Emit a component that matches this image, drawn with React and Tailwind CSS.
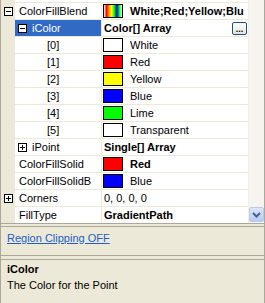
import React from "react";

const rows = [
  { name: "ColorFillBlend", level: 0, expander: "minus", swatch: "blend", value: "White;Red;Yellow;Blu", bold: true },
  { name: "iColor", level: 1, expander: "minus", value: "Color[] Array", bold: true, selected: true, button: true },
  { name: "[0]", level: 2, swatch: "#FFFFFF", value: "White" },
  { name: "[1]", level: 2, swatch: "#FF0000", value: "Red" },
  { name: "[2]", level: 2, swatch: "#FFFF00", value: "Yellow" },
  { name: "[3]", level: 2, swatch: "#0000FF", value: "Blue" },
  { name: "[4]", level: 2, swatch: "#00FF00", value: "Lime" },
  { name: "[5]", level: 2, swatch: "#FFFFFF", value: "Transparent" },
  { name: "iPoint", level: 1, expander: "plus", value: "Single[] Array", bold: true },
  { name: "ColorFillSolid", level: 0, swatch: "#FF0000", value: "Red", bold: true },
  { name: "ColorFillSolidB", level: 0, swatch: "#0000FF", value: "Blue" },
  { name: "Corners", level: 0, expander: "plus", value: "0, 0, 0, 0" },
  { name: "FillType", level: 0, value: "GradientPath", bold: true },
];

function Expander({ plus }) {
  return (
    <span className="relative flex h-[9px] w-[9px] shrink-0 items-center justify-center border border-black bg-white">
      <span className="h-px w-[5px] bg-black" />
      {plus && <span className="absolute h-[5px] w-px bg-black" />}
    </span>
  );
}

function Swatch({ color }) {
  if (color === "blend") {
    return (
      <span className="ml-px h-[14px] w-[20px] shrink-0 border border-black bg-[linear-gradient(to_right,#ffffff,#ff0000,#ffa500,#ffff00,#00ff00,#0000ff,#00ff00,#ffffff)]" />
    );
  }
  return (
    <span
      className="ml-px h-[14px] w-[20px] shrink-0 border border-black"
      style={{ backgroundColor: color }}
    />
  );
}

function Row({ row }) {
  const top = row.level === 0;
  return (
    <div className="flex h-[17px]">
      <div className="flex w-[14px] shrink-0 items-center justify-center bg-[#ECE9D8] pb-px">
        {top && row.expander && <Expander plus={row.expander === "plus"} />}
      </div>
      <div className="flex flex-1 border-b border-[#ECE9D8] bg-white">
        <div
          className={
            "flex w-[87px] shrink-0 items-center overflow-hidden whitespace-nowrap border-r border-[#ECE9D8] " +
            (row.selected ? "bg-[#316AC5] text-white " : "") +
            (row.level === 0 ? "pl-[4px]" : row.level === 1 ? "pl-[3px]" : "pl-[32px]")
          }
        >
          {row.level === 1 && (
            <span className="mr-[5px]">
              <Expander plus={row.expander === "plus"} />
            </span>
          )}
          {row.name}
        </div>
        <div className="flex min-w-0 flex-1 items-center overflow-hidden whitespace-nowrap">
          {row.swatch && <Swatch color={row.swatch} />}
          <span className={(row.swatch ? "ml-[7px] " : "ml-[2px] ") + (row.bold ? "font-bold" : "")}>
            {row.value}
          </span>
          {row.button && (
            <span className="ml-auto mr-px flex h-[13px] w-[15px] shrink-0 items-end justify-center rounded-[2px] border border-[#1C5180] bg-[linear-gradient(#ffffff,#e6e4dc)] pb-px text-[9px] font-bold leading-[8px] text-black">
              ...
            </span>
          )}
        </div>
      </div>
    </div>
  );
}

export default function App() {
  return (
    <div
      className="flex h-[303px] w-[265px] flex-col overflow-hidden border-x border-[#ACA899] bg-[#ECE9D8] text-[11px] leading-[16px] text-black"
      style={{ fontFamily: '"Liberation Sans", Arial, sans-serif' }}
    >
      <div className="flex h-[224px] shrink-0 border-b border-[#ACA899]">
        <div className="flex-1 overflow-hidden">
          <div className="-mt-[14px]">
            <div className="flex h-[17px]">
              <div className="w-[14px] shrink-0 bg-[#ECE9D8]" />
              <div className="flex-1 border-b border-[#ECE9D8] bg-white" />
            </div>
            {rows.map((r) => (
              <Row key={r.name} row={r} />
            ))}
          </div>
        </div>
        <div className="flex w-[16px] shrink-0 flex-col bg-[#F5F4EE] border-l border-[#F0EFE8]">
          <div className="flex-1" />
          <div className="mb-px flex h-[15px] items-center justify-center rounded-[2px] border border-[#B9C9EF] bg-[linear-gradient(#DCE6FD,#B6CAF8)]">
            <svg width="9" height="6" viewBox="0 0 9 6">
              <path d="M1 1 L4.5 4.5 L8 1" fill="none" stroke="#4D6185" strokeWidth="2" />
            </svg>
          </div>
        </div>
      </div>
      <div className="h-[2px] shrink-0" />
      <div className="h-[30px] shrink-0 border-y border-[#ACA899] pl-[6px] pt-[4px] leading-[14px]">
        <span className="text-[#215DC6] underline">Region Clipping OFF</span>
      </div>
      <div className="h-[3px] shrink-0" />
      <div className="flex-1 border-t border-[#ACA899] pl-[6px] pt-[2px]">
        <div className="font-bold leading-[14px]">iColor</div>
        <div className="mt-px leading-[16px]">The Color for the Point</div>
      </div>
    </div>
  );
}
